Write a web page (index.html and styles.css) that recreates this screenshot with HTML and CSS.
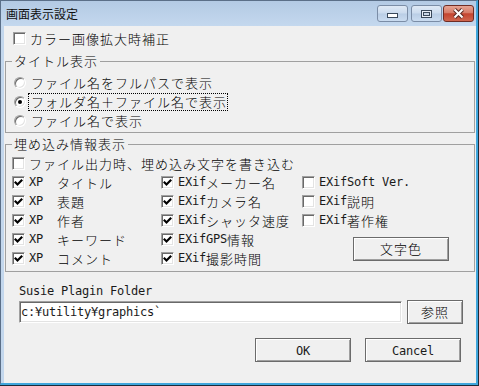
FILE: index.html
```html
<!DOCTYPE html>
<html lang="ja">

<head>
    <meta charset="UTF-8">
    <title>画面表示設定</title>
    <link rel="stylesheet" href="styles.css">
</head>

<body>
    <div class="window">
        <div class="titlebar">
            <span class="title">画面表示設定</span>
            <div class="caption">
                <span class="cap-btn min">
                    <svg width="11" height="5" viewBox="0 0 11 5"><rect x="0.5" y="0.5" width="10" height="4" fill="#fff" stroke="#39485a"/></svg>
                </span>
                <span class="cap-btn max">
                    <svg width="11" height="8" viewBox="0 0 11 8"><rect x="0.5" y="0.5" width="10" height="7" fill="#e8eef6" stroke="#39485a"/><rect x="2.5" y="2.5" width="6" height="3" fill="#c9d6e6" stroke="#39485a"/></svg>
                </span>
                <span class="cap-btn close">
                    <svg width="13" height="11" viewBox="0 0 13 11"><path d="M2.5 1.5 L10.5 9.5 M10.5 1.5 L2.5 9.5" stroke="#5a2a24" stroke-width="4"/><path d="M2.5 1.5 L10.5 9.5 M10.5 1.5 L2.5 9.5" stroke="#fff" stroke-width="2"/></svg>
                </span>
            </div>
        </div>

        <div class="client">
            <div class="row top-check"><span class="cb"></span>カラー画像拡大時補正</div>

            <fieldset class="group group-title">
                <legend>タイトル表示</legend>
                <div class="row"><span class="rb"></span>ファイル名をフルパスで表示</div>
                <div class="row"><span class="rb on"></span><span class="focus">フォルダ名＋ファイル名で表示</span></div>
                <div class="row"><span class="rb"></span>ファイル名で表示</div>
            </fieldset>

            <fieldset class="group group-embed">
                <legend>埋め込み情報表示</legend>
                <div class="row"><span class="cb"></span>ファイル出力時、埋め込み文字を書き込む</div>
                <div class="embed-grid">
                    <div class="row"><span class="cb on"><svg width="11" height="11" viewBox="0 0 11 11"><polyline points="1.8,4.8 4.5,7.5 9.2,2.8" fill="none" stroke="#000" stroke-width="2.2"/></svg></span><span class="lat">XP</span>　タイトル</div>
                    <div class="row"><span class="cb on"><svg width="11" height="11" viewBox="0 0 11 11"><polyline points="1.8,4.8 4.5,7.5 9.2,2.8" fill="none" stroke="#000" stroke-width="2.2"/></svg></span><span class="lat">EXif</span>メーカー名</div>
                    <div class="row"><span class="cb"></span><span class="lat">EXifSoft Ver.</span></div>

                    <div class="row"><span class="cb on"><svg width="11" height="11" viewBox="0 0 11 11"><polyline points="1.8,4.8 4.5,7.5 9.2,2.8" fill="none" stroke="#000" stroke-width="2.2"/></svg></span><span class="lat">XP</span>　表題</div>
                    <div class="row"><span class="cb on"><svg width="11" height="11" viewBox="0 0 11 11"><polyline points="1.8,4.8 4.5,7.5 9.2,2.8" fill="none" stroke="#000" stroke-width="2.2"/></svg></span><span class="lat">EXif</span>カメラ名</div>
                    <div class="row"><span class="cb"></span><span class="lat">EXif</span>説明</div>

                    <div class="row"><span class="cb on"><svg width="11" height="11" viewBox="0 0 11 11"><polyline points="1.8,4.8 4.5,7.5 9.2,2.8" fill="none" stroke="#000" stroke-width="2.2"/></svg></span><span class="lat">XP</span>　作者</div>
                    <div class="row"><span class="cb on"><svg width="11" height="11" viewBox="0 0 11 11"><polyline points="1.8,4.8 4.5,7.5 9.2,2.8" fill="none" stroke="#000" stroke-width="2.2"/></svg></span><span class="lat">EXif</span>シャッタ速度</div>
                    <div class="row"><span class="cb"></span><span class="lat">EXif</span>著作権</div>

                    <div class="row"><span class="cb on"><svg width="11" height="11" viewBox="0 0 11 11"><polyline points="1.8,4.8 4.5,7.5 9.2,2.8" fill="none" stroke="#000" stroke-width="2.2"/></svg></span><span class="lat">XP</span>　キーワード</div>
                    <div class="row"><span class="cb on"><svg width="11" height="11" viewBox="0 0 11 11"><polyline points="1.8,4.8 4.5,7.5 9.2,2.8" fill="none" stroke="#000" stroke-width="2.2"/></svg></span><span class="lat">EXifGPS</span>情報</div>
                    <button class="btn color-btn">文字色</button>

                    <div class="row"><span class="cb on"><svg width="11" height="11" viewBox="0 0 11 11"><polyline points="1.8,4.8 4.5,7.5 9.2,2.8" fill="none" stroke="#000" stroke-width="2.2"/></svg></span><span class="lat">XP</span>　コメント</div>
                    <div class="row"><span class="cb on"><svg width="11" height="11" viewBox="0 0 11 11"><polyline points="1.8,4.8 4.5,7.5 9.2,2.8" fill="none" stroke="#000" stroke-width="2.2"/></svg></span><span class="lat">EXif</span>撮影時間</div>
                </div>
            </fieldset>

            <div class="folder">
                <div class="folder-label lat">Susie Plagin Folder</div>
                <div class="folder-row">
                    <div class="input lat">c:¥utility¥graphics`</div>
                    <button class="btn browse">参照</button>
                </div>
            </div>

            <div class="actions">
                <button class="btn action"><span class="lat">OK</span></button>
                <button class="btn action"><span class="lat">Cancel</span></button>
            </div>
        </div>
    </div>
</body>

</html>
```

FILE: styles.css
```css
body {
    margin: 0;
    background-color: #1b2b3a;
    font-family: "Noto Sans CJK JP", sans-serif;
    font-size: 13px;
    font-weight: 300;
    color: #000;
}

.window {
    width: 478px;
    height: 385px;
    box-sizing: border-box;
    border-top: 1px solid #5b6f88;
    border-left: 1px solid #5b6f88;
    border-right: 2px solid #3fa6dc;
    border-bottom: 2px solid #3fa6dc;
    padding-left: 3px;
    background-color: #c3d7ed;
    display: flex;
    flex-direction: column;
}

/* caption */

.titlebar {
    height: 25px;
    margin-left: -3px;
    display: flex;
    justify-content: space-between;
    align-items: flex-start;
    background: linear-gradient(#b3cae4, #c4d8ee);
}

.title {
    font-size: 12px;
    font-weight: 400;
    line-height: 14px;
    padding: 6px 0 0 5px;
    color: #111;
}

.caption {
    display: flex;
    margin: 4px 2px 0 0;
}

.cap-btn {
    width: 31px;
    height: 17px;
    box-sizing: border-box;
    border: 1px solid #7b8da6;
    border-radius: 3px;
    background: linear-gradient(#dfe9f5, #cbdbee 48%, #b9cde5 52%, #cadcf0);
    display: flex;
    align-items: center;
    justify-content: center;
}

.cap-btn.min {
    align-items: flex-end;
    padding-bottom: 3px;
}

.cap-btn.max {
    margin-left: 3px;
}

.cap-btn.close {
    margin-left: 1px;
    border-color: #6f2c24;
    background: linear-gradient(#e6a494, #d77c68 45%, #c4442f 52%, #d0664e);
}

.cap-btn svg {
    display: block;
}

/* client area */

.client {
    flex: 1;
    background-color: #f0f0f0;
    padding: 0 1px;
    display: flex;
    flex-direction: column;
    letter-spacing: 1px;
}

.row {
    display: flex;
    align-items: center;
    height: 19px;
    line-height: 19px;
    white-space: nowrap;
}

.top-check {
    margin: 3px 0 0 8px;
}

.lat {
    font-family: "DejaVu Sans Mono", monospace;
    font-size: 12px;
    font-weight: 400;
    letter-spacing: -0.22px;
    color: #1a1a1a;
}

.cb {
    flex: none;
    width: 13px;
    height: 13px;
    box-sizing: border-box;
    border: 1px solid;
    border-color: #a0a0a0 #fff #fff #a0a0a0;
    box-shadow: inset 1px 1px 0 #696969, inset -1px -1px 0 #e3e3e3;
    background-color: #fff;
    margin-right: 4px;
}

.cb svg {
    display: block;
}

.rb {
    flex: none;
    width: 12px;
    height: 12px;
    box-sizing: border-box;
    border-radius: 50%;
    border: 1px solid;
    border-color: #a0a0a0 #fff #fff #a0a0a0;
    box-shadow: inset 1px 1px 0 #696969, inset -1px -1px 0 #e3e3e3;
    background-color: #fff;
    margin: 0 5px 0 2px;
    display: flex;
    align-items: center;
    justify-content: center;
}

.rb.on::after {
    content: "";
    width: 4px;
    height: 4px;
    border-radius: 50%;
    background-color: #000;
}

.focus {
    line-height: 16px;
    border: 1px dotted #000;
    margin-left: -3px;
    padding: 0 0 0 2px;
}

/* group boxes */

.group {
    margin: 0;
    padding: 0 0 0 6px;
    border: 1px solid #a0a0a0;
    min-inline-size: 0;
}

.group legend {
    padding: 0 2px;
    line-height: 14px;
}

.group-title {
    margin-top: 6px;
    padding-top: 5px;
    padding-bottom: 2px;
}

.group-embed {
    margin-top: 4px;
    padding-top: 3px;
    padding-bottom: 3px;
}

.embed-grid {
    display: grid;
    grid-template-columns: 149px 141px 1fr;
    grid-auto-rows: 19px;
}

/* buttons */

.btn {
    appearance: none;
    font: inherit;
    letter-spacing: 1px;
    color: #000;
    background-color: #f0f0f0;
    border: 1px solid #6b6b6b;
    border-radius: 0;
    box-shadow: inset 1px 1px 0 #fff, inset -1px -1px 0 #a0a0a0;
    padding: 0;
    height: 24px;
    line-height: 20px;
}

.color-btn {
    grid-column: 3;
    grid-row: 4 / span 2;
    align-self: center;
    margin-left: 51px;
    width: 96px;
}

/* folder */

.folder {
    margin: 11px 0 0 14px;
}

.folder-label {
    height: 17px;
    line-height: 17px;
}

.folder-row {
    display: flex;
    align-items: center;
    height: 24px;
}

.input {
    width: 383px;
    height: 22px;
    box-sizing: border-box;
    border: 1px solid;
    border-color: #a0a0a0 #fff #fff #a0a0a0;
    box-shadow: inset 1px 1px 0 #696969, inset -1px -1px 0 #e3e3e3;
    background-color: #fff;
    line-height: 20px;
    padding-left: 1px;
    white-space: nowrap;
    overflow: hidden;
}

.browse {
    width: 56px;
    margin-left: 5px;
}

.actions {
    display: flex;
    justify-content: flex-end;
    gap: 14px;
    margin-top: 14px;
    padding-right: 14px;
}

.action {
    width: 96px;
}
```
